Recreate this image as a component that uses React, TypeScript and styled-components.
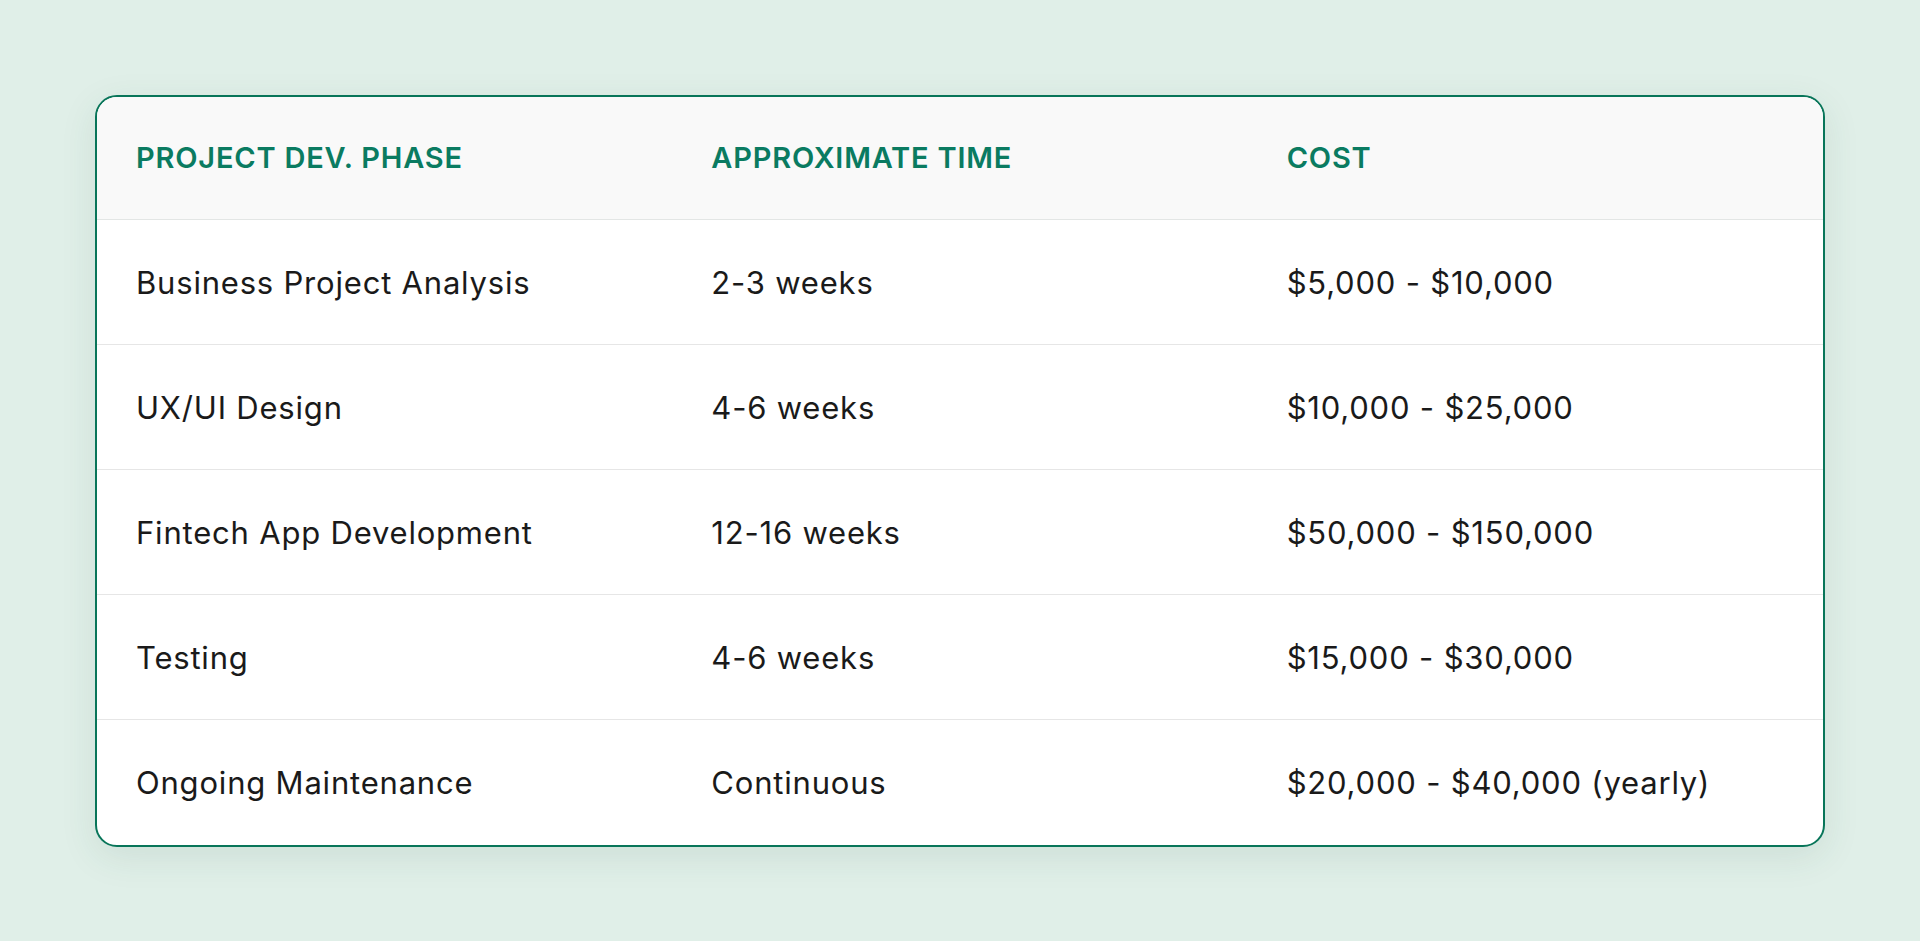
import React from 'react';
import styled, { createGlobalStyle } from 'styled-components';

interface PhaseRow {
  phase: string;
  time: string;
  cost: string;
}

const rows: PhaseRow[] = [
  { phase: 'Business Project Analysis', time: '2-3 weeks', cost: '$5,000 - $10,000' },
  { phase: 'UX/UI Design', time: '4-6 weeks', cost: '$10,000 - $25,000' },
  { phase: 'Fintech App Development', time: '12-16 weeks', cost: '$50,000 - $150,000' },
  { phase: 'Testing', time: '4-6 weeks', cost: '$15,000 - $30,000' },
  { phase: 'Ongoing Maintenance', time: 'Continuous', cost: '$20,000 - $40,000 (yearly)' },
];

const GlobalStyle = createGlobalStyle`
  * {
    box-sizing: border-box;
  }

  html, body {
    margin: 0;
    padding: 0;
    background-color: #e0efe8;
    font-family: Inter, "Noto Sans", sans-serif;
  }
`;

const App: React.FC = () => {
  return (
    <>
      <GlobalStyle />
      <Page>
        <Card>
          <Table>
            <colgroup>
              <col />
              <col />
              <col />
            </colgroup>
            <thead>
              <HeadRow>
                <HeadCell>Project Dev. Phase</HeadCell>
                <HeadCell>Approximate Time</HeadCell>
                <HeadCell>Cost</HeadCell>
              </HeadRow>
            </thead>
            <tbody>
              {rows.map((row) => (
                <BodyRow key={row.phase}>
                  <Cell>{row.phase}</Cell>
                  <Cell>{row.time}</Cell>
                  <Cell>{row.cost}</Cell>
                </BodyRow>
              ))}
            </tbody>
          </Table>
        </Card>
      </Page>
    </>
  );
};

const Page = styled.div`
  min-height: 100vh;
  display: flex;
  align-items: center;
  justify-content: center;
`;

const Card = styled.div`
  width: 1730px;
  background-color: #ffffff;
  border: 2px solid #087559;
  border-radius: 22px;
  overflow: hidden;
  box-shadow: 0 10px 36px rgba(40, 90, 70, 0.1);
`;

const Table = styled.table`
  width: 100%;
  border-collapse: collapse;
  table-layout: fixed;

  col {
    width: 33.333%;
  }
`;

const HeadRow = styled.tr`
  height: 123px;
  background-color: #f9f9f9;
  border-bottom: 1.5px solid #e3e6e5;
`;

const HeadCell = styled.th`
  padding: 0 39px;
  text-align: left;
  vertical-align: middle;
  font-size: 29px;
  font-weight: 600;
  text-transform: uppercase;
  color: #0a7b61;
  letter-spacing: 0.8px;
`;

const BodyRow = styled.tr`
  height: 125px;
  border-bottom: 1.5px solid #e6e6e6;

  &:last-child {
    border-bottom: none;
  }
`;

const Cell = styled.td`
  padding: 0 39px;
  vertical-align: middle;
  font-size: 31px;
  font-weight: 400;
  letter-spacing: 0.8px;
  color: #1a1a1a;
`;

export default App;
